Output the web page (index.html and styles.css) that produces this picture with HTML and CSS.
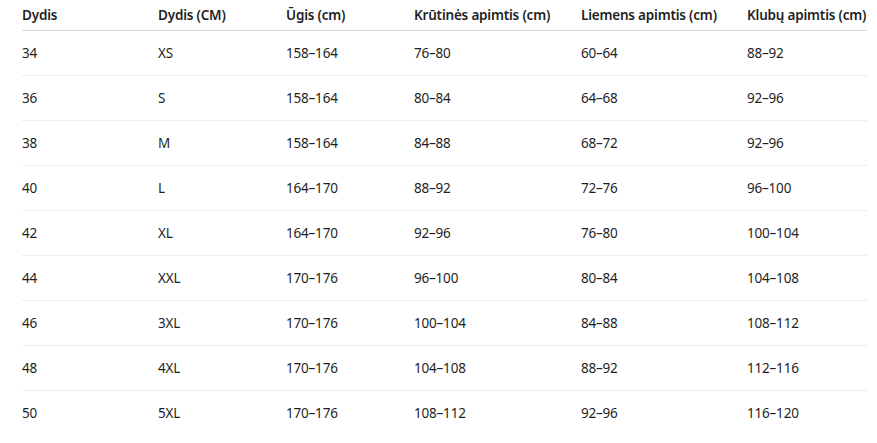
FILE: index.html
```html
<!DOCTYPE html>
<html lang="lt">
<head>
<meta charset="utf-8">
<link rel="stylesheet" href="styles.css">
</head>
<body>
<table class="size-table">
  <colgroup>
    <col class="c1"><col class="c2"><col class="c3"><col class="c4"><col class="c5"><col class="c6">
  </colgroup>
  <thead>
    <tr><th>Dydis</th><th>Dydis (CM)</th><th>Ūgis (cm)</th><th>Krūtinės apimtis (cm)</th><th>Liemens apimtis (cm)</th><th>Klubų apimtis (cm)</th></tr>
  </thead>
  <tbody>
    <tr><td>34</td><td>XS</td><td>158–164</td><td>76–80</td><td>60–64</td><td>88–92</td></tr>
    <tr><td>36</td><td>S</td><td>158–164</td><td>80–84</td><td>64–68</td><td>92–96</td></tr>
    <tr><td>38</td><td>M</td><td>158–164</td><td>84–88</td><td>68–72</td><td>92–96</td></tr>
    <tr><td>40</td><td>L</td><td>164–170</td><td>88–92</td><td>72–76</td><td>96–100</td></tr>
    <tr><td>42</td><td>XL</td><td>164–170</td><td>92–96</td><td>76–80</td><td>100–104</td></tr>
    <tr><td>44</td><td>XXL</td><td>170–176</td><td>96–100</td><td>80–84</td><td>104–108</td></tr>
    <tr><td>46</td><td>3XL</td><td>170–176</td><td>100–104</td><td>84–88</td><td>108–112</td></tr>
    <tr><td>48</td><td>4XL</td><td>170–176</td><td>104–108</td><td>88–92</td><td>112–116</td></tr>
    <tr><td>50</td><td>5XL</td><td>170–176</td><td>108–112</td><td>92–96</td><td>116–120</td></tr>
  </tbody>
</table>
</body>
</html>
```
FILE: styles.css
```css
html, body { margin: 0; padding: 0; background: #fff; }
body { padding: 0 10px 0 22px; font-family: "Noto Sans", "Open Sans", sans-serif; font-size: 13.5px; letter-spacing: -0.2px; color: #1f1f1f; }
.size-table { border-collapse: collapse; table-layout: fixed; width: 845px; }
.c1 { width: 136px; } .c2 { width: 128px; } .c3 { width: 128px; } .c4 { width: 167px; } .c5 { width: 166px; } .c6 { width: 120px; }
.size-table th { text-align: left; font-weight: 600; line-height: 20px; padding: 5px 0 5px; border-bottom: 1px solid #d6d6d6; white-space: nowrap; }
.size-table td { line-height: 20px; padding: 12px 0; border-bottom: 1px solid #ededed; white-space: nowrap; }
.size-table tbody tr:last-child td { border-bottom: none; }
```
